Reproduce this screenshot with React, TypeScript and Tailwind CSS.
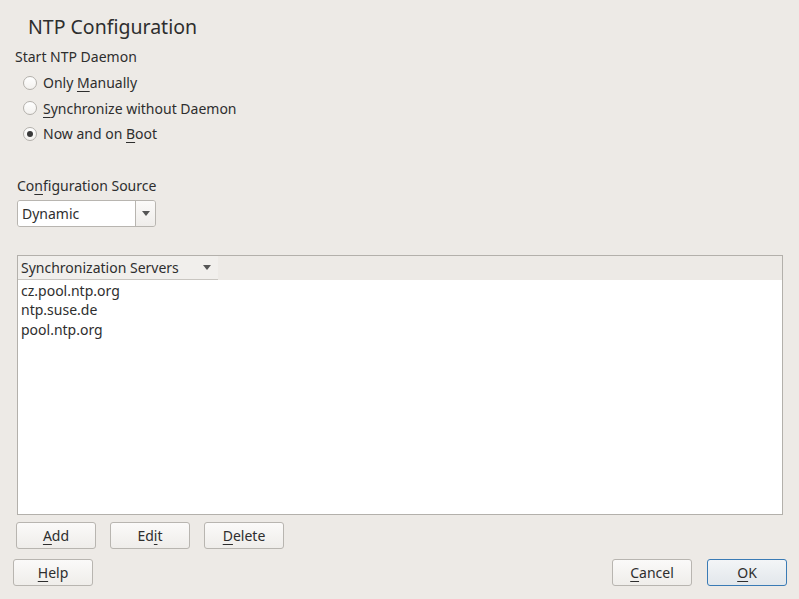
import type { ReactNode } from 'react';

const font = { fontFamily: '"Noto Sans", "Open Sans", sans-serif' };

function U({ children }: { children: ReactNode }) {
  return <span className="underline underline-offset-[3px] decoration-1">{children}</span>;
}

function Radio({ checked, children }: { checked?: boolean; children: ReactNode }) {
  return (
    <div className="flex items-center h-[25.5px] pl-[23px] gap-[6px]">
      <span className="w-[14px] h-[14px] rounded-full border border-[#b3b0ab] bg-gradient-to-b from-white to-[#f3f1ee] flex items-center justify-center">
        {checked && <span className="w-[6px] h-[6px] rounded-full bg-[#3a3a3a]" />}
      </span>
      <span>{children}</span>
    </div>
  );
}

function Btn({ children, primary, className = '' }: { children: ReactNode; primary?: boolean; className?: string }) {
  return (
    <button
      className={`w-[80px] h-[27px] rounded-[3px] border text-[14px] text-[#2e2e2e] ${
        primary
          ? 'border-[#3a7bb5] bg-gradient-to-b from-[#f3f5f7] to-[#e2e7eb]'
          : 'border-[#b8b5b0] bg-gradient-to-b from-[#fbfaf9] to-[#efedea]'
      } ${className}`}
    >
      {children}
    </button>
  );
}

export default function App() {
  const servers = ['cz.pool.ntp.org', 'ntp.suse.de', 'pool.ntp.org'];
  return (
    <div className="w-[799px] h-[599px] bg-[#edeae6] text-[#2e2e2e] text-[14px] flex flex-col relative overflow-hidden" style={font}>
      <h1 className="text-[19.5px] leading-none pl-[28px] pt-[17px] h-[45px]">NTP Configuration</h1>
      <div className="pl-[15px] h-[24px] leading-[24px]">Start NTP Daemon</div>
      <div className="flex flex-col mt-[1px]">
        <Radio>Only <U>M</U>anually</Radio>
        <Radio><U>S</U>ynchronize without Daemon</Radio>
        <Radio checked>Now and on <U>B</U>oot</Radio>
      </div>

      <div className="pl-[17px] mt-[28px] h-[22px] leading-[22px]">Co<U>n</U>figuration Source</div>
      <div className="ml-[17px] mt-[3px] w-[139px] h-[27px] flex rounded-[3px] border border-[#b8b5b0] overflow-hidden">
        <div className="flex-1 bg-white pl-[4px] leading-[25px]">Dynamic</div>
        <div className="w-[20px] border-l border-[#b8b5b0] bg-gradient-to-b from-[#fbfaf9] to-[#efedea] flex items-center justify-center">
          <svg width="8" height="5" viewBox="0 0 8 5"><path d="M0 0h8L4 5z" fill="#555" /></svg>
        </div>
      </div>

      <div className="ml-[17px] mt-[28px] w-[766px] h-[260px] border border-[#b3b0ab] flex flex-col">
        <div className="h-[24px] flex bg-[#edeae6]">
          <div className="w-[200px] h-[24px] border-b border-[#c9c6c1] bg-[#f1efec] flex items-center justify-between pl-[3px] pr-[7px]">
            <span>Synchronization Servers</span>
            <svg width="8" height="5" viewBox="0 0 8 5"><path d="M0 0h8L4 5z" fill="#555" /></svg>
          </div>
        </div>
        <div className="flex-1 bg-white pt-[1px]">
          {servers.map(s => (
            <div key={s} className="pl-[3px] h-[19.5px] leading-[19.5px]">{s}</div>
          ))}
        </div>
      </div>

      <div className="flex gap-[14px] ml-[16px] mt-[7px]">
        <Btn><U>A</U>dd</Btn>
        <Btn>Ed<U>i</U>t</Btn>
        <Btn><U>D</U>elete</Btn>
      </div>

      <div className="flex ml-[13px] mt-[10px] mr-[12px]">
        <Btn><U>H</U>elp</Btn>
        <div className="flex-1" />
        <Btn className="mr-[15px]"><U>C</U>ancel</Btn>
        <Btn primary><U>O</U>K</Btn>
      </div>
    </div>
  );
}
